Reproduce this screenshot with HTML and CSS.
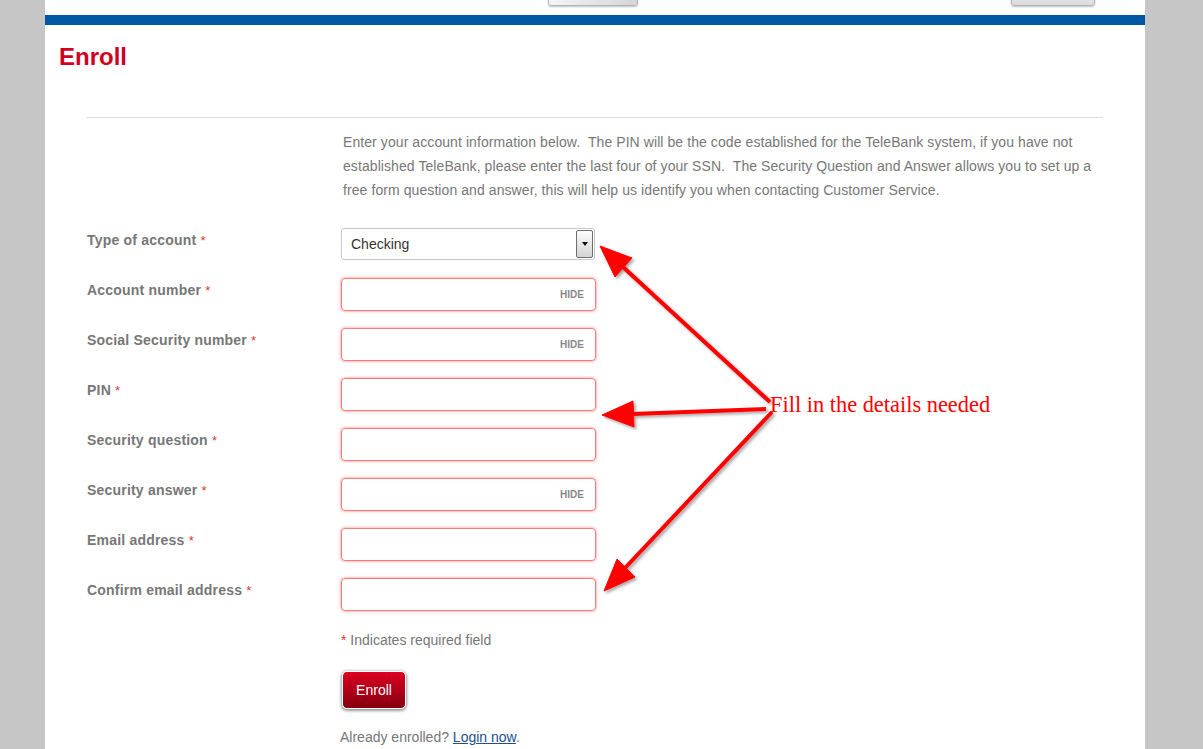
FILE: index.html
```html
<!DOCTYPE html>
<html lang="en">
<head>
    <meta charset="UTF-8">
    <title>Enroll</title>
    <link rel="stylesheet" href="styles.css">
</head>
<body>
    <div class="page">
        <div class="topbar">
            <span class="tab-btn tab-one"></span>
            <span class="tab-btn tab-two"></span>
        </div>
        <div class="blue-bar"></div>

        <h1>Enroll</h1>

        <div class="enroll">
            <p class="intro">Enter your account information below.&nbsp; The PIN will be the code established for the TeleBank system, if you have not<br>established TeleBank, please enter the last four of your SSN.&nbsp; The Security Question and Answer allows you to set up a<br>free form question and answer, this will help us identify you when contacting Customer Service.</p>

            <div class="form-grid">
                <label>Type of account <span class="req">*</span></label>
                <div class="select-box">
                    <span class="select-value">Checking</span>
                    <span class="select-arrow"><span class="tri"></span></span>
                </div>

                <label>Account number <span class="req">*</span></label>
                <div class="field"><input type="text"><span class="hide">HIDE</span></div>

                <label>Social Security number <span class="req">*</span></label>
                <div class="field"><input type="text"><span class="hide">HIDE</span></div>

                <label>PIN <span class="req">*</span></label>
                <div class="field"><input type="text"></div>

                <label>Security question <span class="req">*</span></label>
                <div class="field"><input type="text"></div>

                <label>Security answer <span class="req">*</span></label>
                <div class="field"><input type="text"><span class="hide">HIDE</span></div>

                <label>Email address <span class="req">*</span></label>
                <div class="field"><input type="text"></div>

                <label>Confirm email address <span class="req">*</span></label>
                <div class="field"><input type="text"></div>
            </div>

            <div class="form-foot">
                <p class="required-note"><span class="req">*</span> Indicates required field</p>
                <button class="enroll-btn">Enroll</button>
                <p class="already">Already enrolled? <a href="#">Login now</a>.</p>
            </div>
        </div>
    </div>

    <!-- annotation drawn over the screenshot -->
    <svg class="arrows" width="1203" height="749" viewBox="0 0 1203 749">
        <defs>
            <filter id="shade" x="-20%" y="-20%" width="140%" height="140%">
                <feDropShadow dx="2" dy="2" stdDeviation="1.5" flood-color="#000" flood-opacity="0.35"/>
            </filter>
        </defs>
        <g filter="url(#shade)" fill="#ff0000" stroke="#ff0000">
            <line x1="770" y1="402" x2="623" y2="267" stroke-width="4"/>
            <polygon points="600,246 632,258 615,277" stroke-width="1"/>
            <line x1="766" y1="409" x2="632" y2="414" stroke-width="4"/>
            <polygon points="602,415 634,427 633,401" stroke-width="1"/>
            <line x1="772" y1="412" x2="625" y2="568" stroke-width="4"/>
            <polygon points="604,591 635,577 617,559" stroke-width="1"/>
        </g>
    </svg>
    <span class="note">Fill in the details needed</span>
</body>
</html>
```

FILE: styles.css
```css
body {
    margin: 0;
    background: #c6c6c6;
    font-family: "Liberation Sans", Arial, sans-serif;
}
.page {
    width: 1100px;
    margin-left: 45px;
    min-height: 749px;
    background: #fff;
}
.topbar {
    height: 15px;
    display: flex;
    align-items: flex-end;
    overflow: hidden;
}
.tab-btn {
    display: block;
    height: 30px;
    margin-bottom: 9px;
    box-sizing: border-box;
    border: 1px solid #b4b4b4;
    border-radius: 3px;
    background: linear-gradient(to right, #f4f4f4, #d6d6d6);
    box-shadow: 0 1px 2px rgba(0, 0, 0, 0.25);
}
.tab-one {
    width: 90px;
    margin-left: 503px;
}
.tab-two {
    width: 84px;
    margin-left: 373px;
    background: linear-gradient(#f2f2f2, #dcdcdc);
}
.blue-bar {
    height: 10px;
    background: #0057a4;
}
h1 {
    margin: 17px 0 45px 14px;
    font-size: 24px;
    line-height: 30px;
    color: #d2001e;
}
.enroll {
    margin: 0 42px;
    border-top: 1px solid #dcdcdc;
}
.intro {
    margin: 12px 0 0;
    padding-left: 256px;
    font-size: 14px;
    line-height: 24px;
    letter-spacing: 0.08px;
    color: #777;
    white-space: nowrap;
}
.form-grid {
    display: grid;
    grid-template-columns: 254px 255px;
    grid-auto-rows: 33px;
    row-gap: 17px;
    margin-top: 26px;
}
.form-grid label {
    font-size: 14px;
    font-weight: bold;
    line-height: 24px;
    letter-spacing: 0.2px;
    color: #777;
}
.req {
    color: #e0362c;
    font-weight: normal;
}
.form-grid label .req {
    font-size: 13px;
}
.select-box {
    display: flex;
    align-items: center;
    height: 32px;
    box-sizing: border-box;
    border: 1px solid #c8c8c8;
    border-radius: 3px;
    padding: 1px 1px 1px 9px;
    width: 254px;
}
.select-value {
    flex: 1;
    font-size: 14px;
    color: #333;
}
.select-arrow {
    display: flex;
    align-items: center;
    justify-content: center;
    width: 17px;
    height: 28px;
    box-sizing: border-box;
    border: 1px solid #6e6e6e;
    border-radius: 2px;
    background: linear-gradient(#fdfdfd, #d4d4d4);
}
.tri {
    width: 0;
    height: 0;
    border-left: 3px solid transparent;
    border-right: 3px solid transparent;
    border-top: 4px solid #111;
}
.field {
    display: flex;
    align-items: center;
    height: 33px;
    box-sizing: border-box;
    border: 1px solid #f47c7c;
    border-radius: 4px;
    box-shadow: 0 0 3px rgba(255, 50, 50, 0.65);
    padding: 0 11px 0 8px;
}
.field input {
    flex: 1;
    min-width: 0;
    border: none;
    outline: none;
    background: transparent;
    font-size: 14px;
}
.hide {
    font-size: 10px;
    font-weight: bold;
    color: #888;
}
.form-foot {
    padding-left: 254px;
}
.required-note {
    margin: 17px 0 0;
    font-size: 14px;
    line-height: 24px;
    color: #777;
}
.enroll-btn {
    display: block;
    margin: 19px 0 0 1px;
    width: 64px;
    height: 38px;
    border: 1px solid #fff;
    border-radius: 5px;
    background: linear-gradient(#dc0020, #85000f);
    box-shadow: 0 1px 3px 1px rgba(0, 0, 0, 0.4);
    color: #fff;
    font-family: "Liberation Sans", Arial, sans-serif;
    font-size: 14px;
    cursor: pointer;
}
.already {
    margin: 16px 0 0 -1px;
    font-size: 14px;
    line-height: 24px;
    color: #777;
}
.already a {
    color: #1d4f91;
}
.arrows {
    position: absolute;
    left: 0;
    top: 0;
    pointer-events: none;
}
.note {
    position: absolute;
    left: 770px;
    top: 394px;
    font-family: "Liberation Serif", "Times New Roman", serif;
    font-size: 22.4px;
    line-height: 22px;
    color: #ff0000;
    white-space: nowrap;
}
```
